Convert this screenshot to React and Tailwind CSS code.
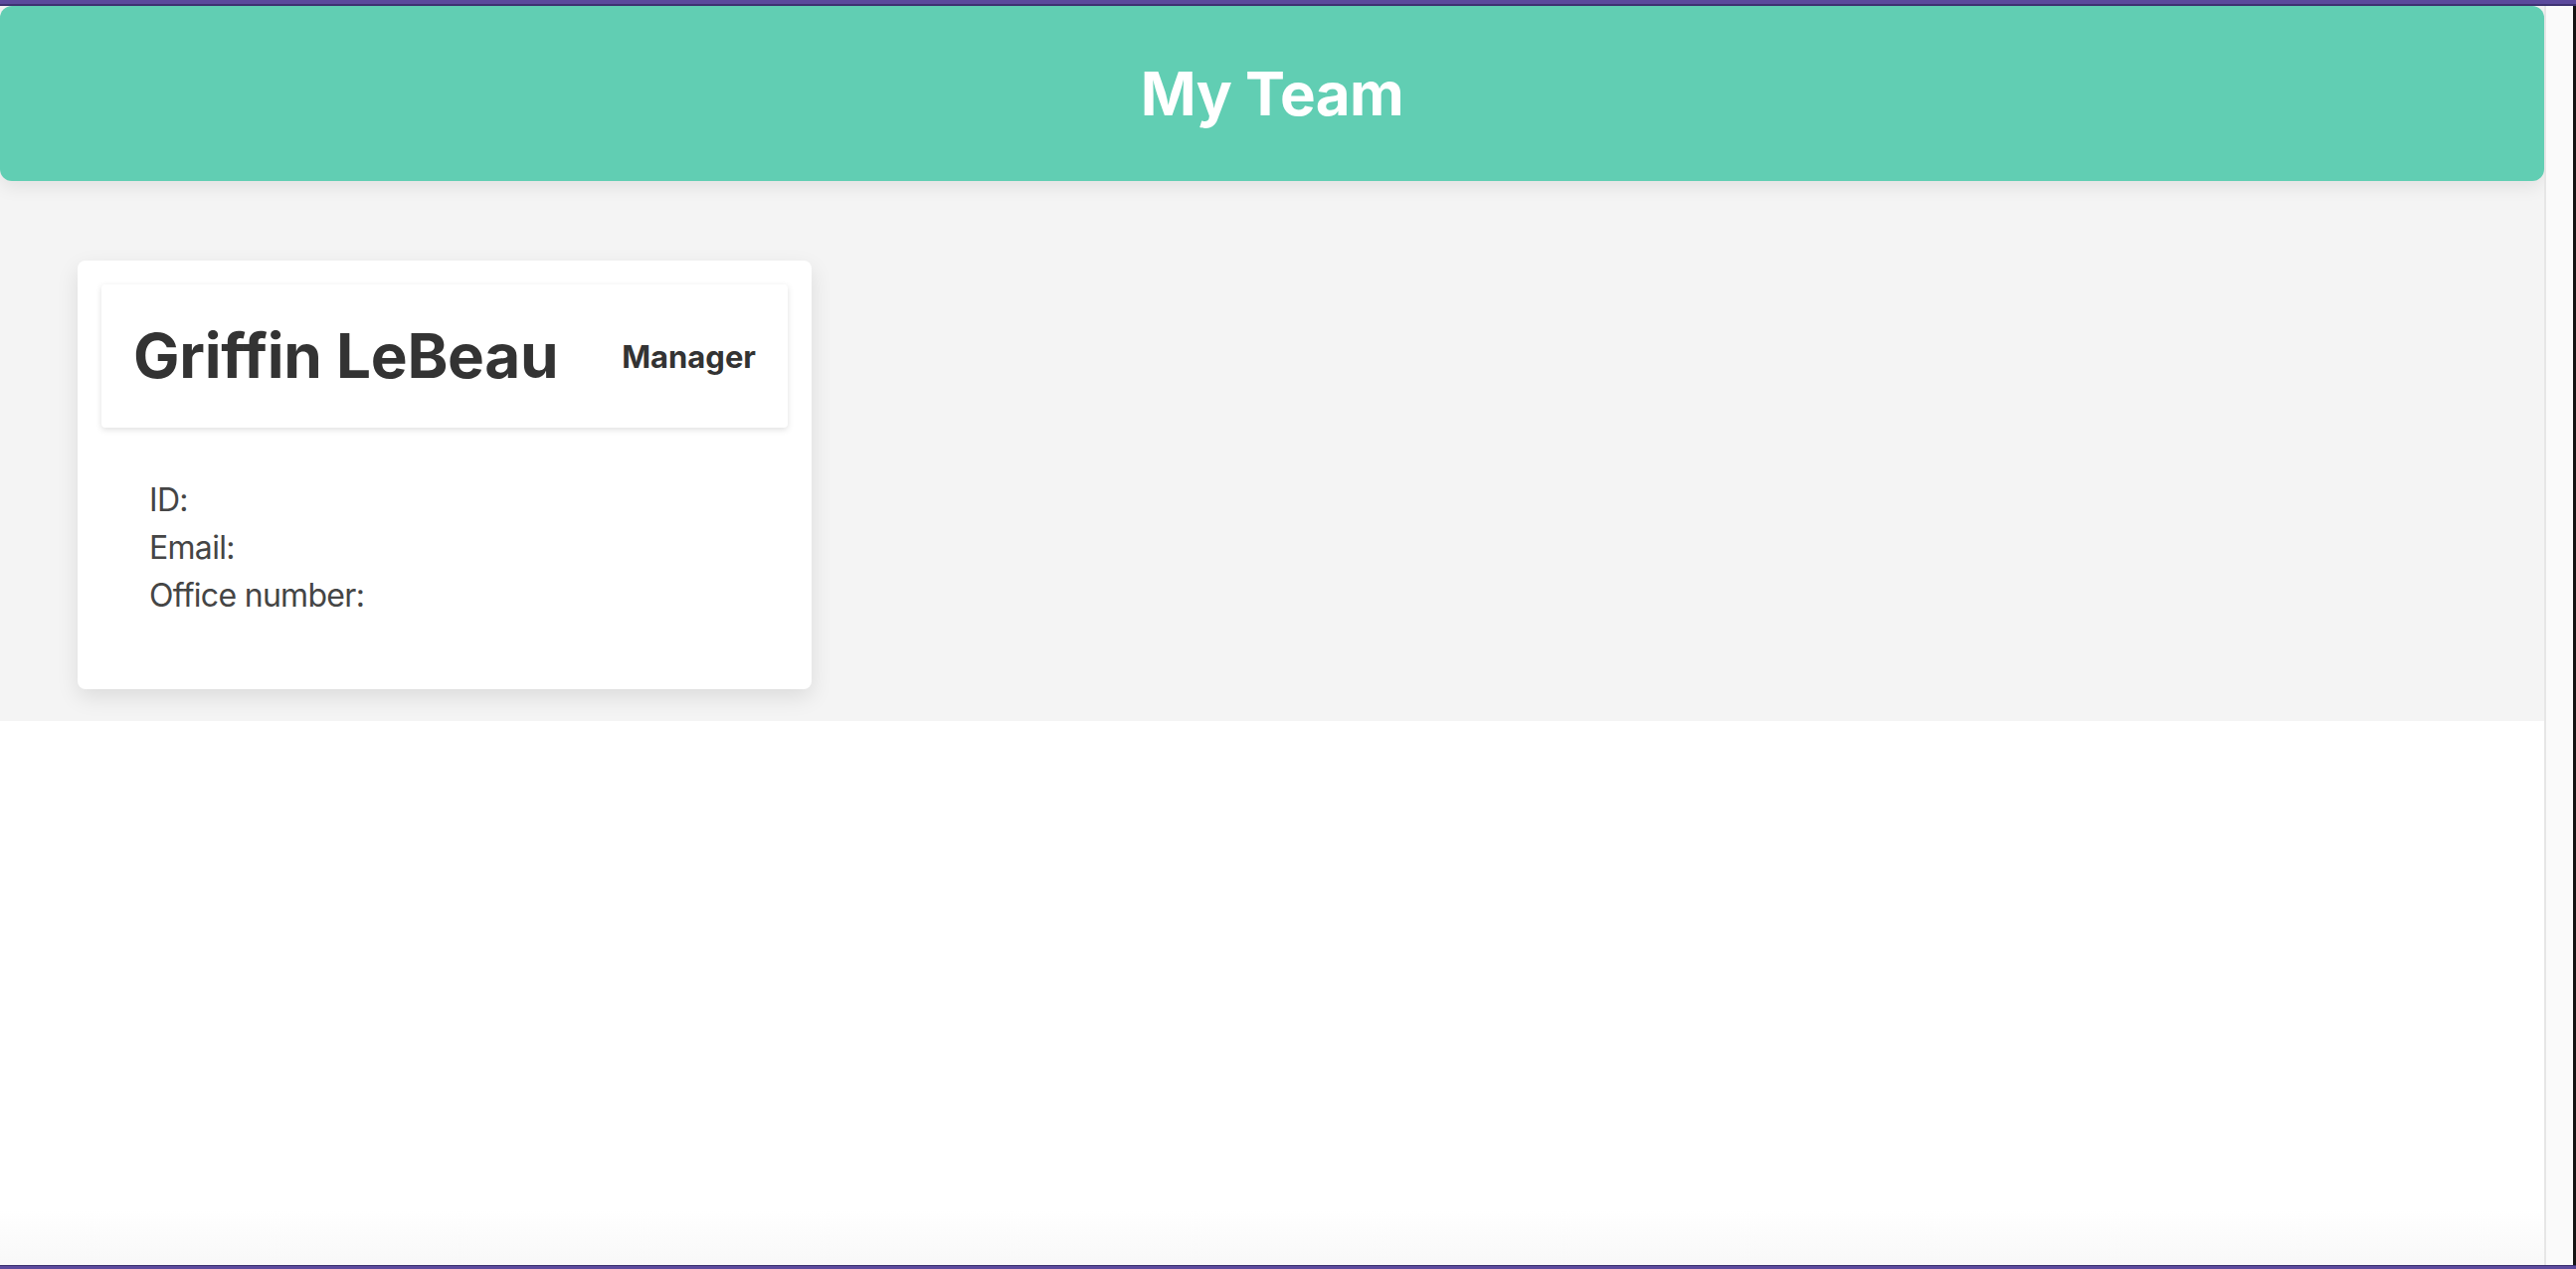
import React from "react";

export default function App() {
  return (
    <div className="h-screen w-full flex flex-col overflow-hidden bg-white font-['Inter','Noto_Sans',sans-serif]">
      <div className="h-[6px] shrink-0 bg-[#5c4a9d] border-b-2 border-[#3e3373]" />
      <div className="flex-1 flex min-h-0">
        <main className="flex-1 min-w-0 flex flex-col bg-white">
          <section className="bg-[#f4f4f4] pb-[32px]">
            <header className="h-[176px] rounded-[12px] bg-[#61ceb3] shadow-[0_6px_18px_rgba(0,0,0,0.08)] flex items-center justify-center">
              <h1 className="text-[60px] font-bold text-white leading-none tracking-[-0.5px]">My Team</h1>
            </header>
            <div className="pt-[80px] pl-[78px]">
              <div className="w-[738px] h-[431px] bg-white rounded-[8px] shadow-[0_8px_22px_rgba(0,0,0,0.10)] pt-[24px] px-[24px]">
                <div className="h-[144px] bg-white rounded-[4px] shadow-[0_2px_6px_rgba(0,0,0,0.13)] flex items-center justify-between px-[32px]">
                  <h2 className="text-[62px] font-bold text-[#333333] leading-none tracking-[-0.3px]">Griffin LeBeau</h2>
                  <span className="text-[31px] font-bold text-[#333333] leading-none">Manager</span>
                </div>
                <ul className="pt-[49px] pl-[48px] text-[32px] leading-[48px] tracking-[-0.7px] text-[#454545]">
                  <li>ID:</li>
                  <li>Email:</li>
                  <li>Office number:</li>
                </ul>
              </div>
            </div>
          </section>
          <div className="flex-1 bg-gradient-to-b from-white from-[90%] to-[#f8f8f8]" />
        </main>
        <div className="w-[29px] shrink-0 border-l-2 border-[#e6e6e6] bg-[#fafafa]" />
        <div className="w-[3px] shrink-0 bg-[#141414]" />
      </div>
      <div className="h-[4px] shrink-0 bg-[#5c4a9d] border-t border-[#3a2f6e]" />
    </div>
  );
}
